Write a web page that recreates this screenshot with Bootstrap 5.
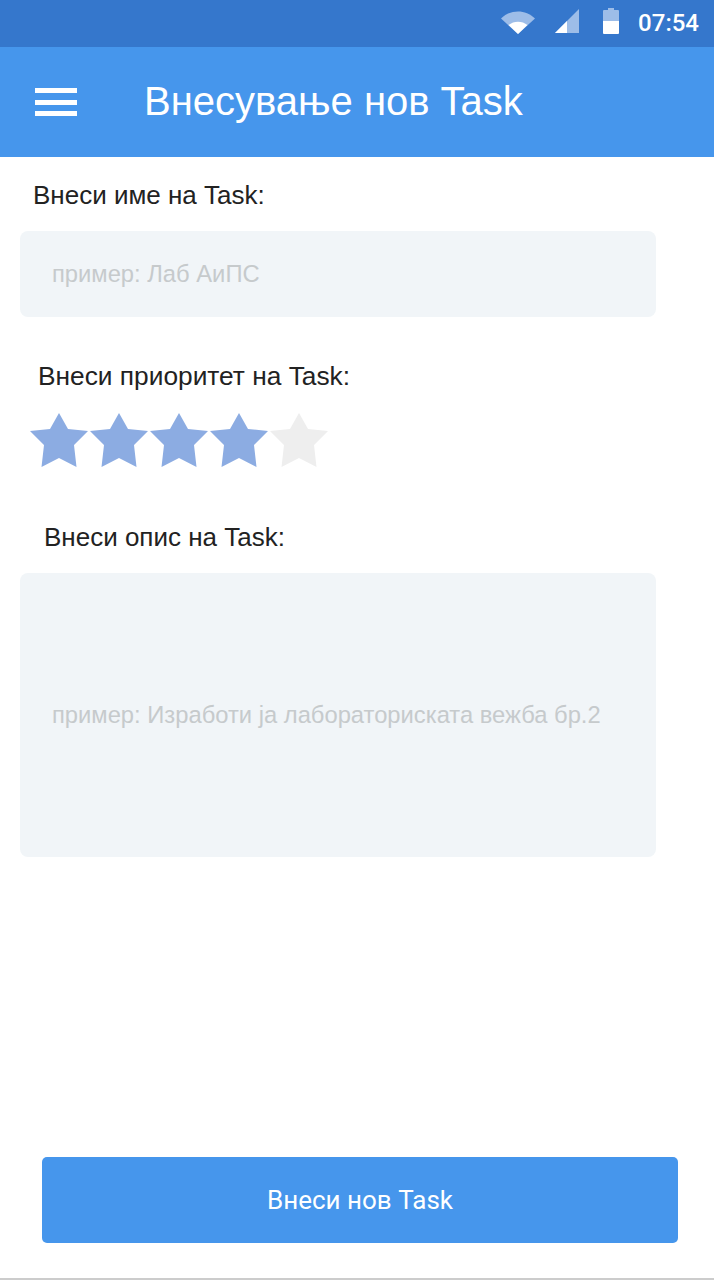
<!DOCTYPE html>
<html lang="mk">
<head>
    <meta charset="UTF-8">
    <meta name="viewport" content="width=device-width, initial-scale=1.0">
    <title>Внесување нов Task</title>
    <link href="https://cdn.jsdelivr.net/npm/bootstrap@5.3.0/dist/css/bootstrap.min.css" rel="stylesheet">
    <style>
        body {
            height: 1280px;
            font-family: "Liberation Sans", Arial, sans-serif;
            color: #222;
            background: #fff;
        }
        .status-strip {
            height: 47px;
            background: #3577cc;
            color: #fff;
            padding-right: 15px;
        }
        .status-time { font-family: Roboto, sans-serif; font-size: 24px; font-weight: 500; line-height: 1; margin: 0 0 2px 19px; }
        .wifi-icon { margin-bottom: 2px; }
        .signal-icon { margin: 0 0 5px 20px; }
        .battery-icon { margin: 0 0 6px 24px; }
        .app-strip {
            height: 110px;
            background: #4696ec;
            color: #fff;
            padding-left: 35px;
        }
        .app-title { font-size: 40px; font-weight: 400; line-height: 1; margin: 0 0 2px 67px; }
        .burger { width: 42px; height: 28px; flex-direction: column; justify-content: space-between; }
        .burger span { height: 5px; background: #fff; display: block; }
        .field-label { font-size: 26px; line-height: 30px; margin: 0; }
        .label-name { padding: 23px 0 0 33px; }
        .label-priority { padding: 44px 0 0 38px; font-size: 26.3px; }
        .label-desc { padding: 54px 0 0 44px; }
        .task-input.form-control {
            display: block;
            width: 636px;
            margin-left: 20px;
            border: 0;
            border-radius: 8px;
            background: #f1f5f8;
            font-family: "Liberation Sans", Arial, sans-serif;
            font-size: 23.75px;
            color: #222;
            padding: 0 32px;
            box-shadow: none;
        }
        .task-input::placeholder { color: #c6cacc; opacity: 1; }
        .name-input.form-control { height: 86px; margin-top: 21px; }
        .desc-input.form-control { height: 284px; min-height: 284px; margin-top: 21px; padding-top: 127px; line-height: 30px; resize: none; }
        .star-row { margin: 22px 0 1px 30px; gap: 2px; }
        .star-row svg { width: 58px; height: 54px; display: block; }
        .star-on { fill: #8cace2; }
        .star-off { fill: #eeeeee; }
        .submit-btn.btn {
            width: 636px;
            height: 86px;
            margin: 0 0 35px 42px;
            border: 0;
            border-radius: 5px;
            background: #4696ec;
            color: #fff;
            font-family: Roboto, sans-serif;
            font-size: 26px;
            font-weight: 400;
        }
        .bottom-rule { height: 2px; background: #ccc; }
    </style>
</head>
<body class="d-flex flex-column">
    <div class="status-strip d-flex align-items-center justify-content-end">
        <svg width="34" height="23" viewBox="0 0 34 23" class="wifi-icon">
            <path d="M0 7.5 C9.5 -2 24.5 -2 34 7.5 L17 23 Z" fill="#9dbde8"/>
            <path d="M7.5 14 C13 9.5 21 9.5 26.5 14 L17 23 Z" fill="#fff"/>
        </svg>
        <svg width="24" height="24" viewBox="0 0 24 24" class="signal-icon">
            <path d="M24 0 V24 H0 Z" fill="#9dbde8"/>
            <path d="M12 12 V24 H0 Z" fill="#fff"/>
        </svg>
        <svg width="16" height="26" viewBox="0 0 16 26" class="battery-icon">
            <path d="M5 0 H11 V2 H15 Q16 2 16 3 V13 H0 V3 Q0 2 1 2 H5 Z" fill="#9dbde8"/>
            <path d="M0 13 H16 V25 Q16 26 15 26 H1 Q0 26 0 25 Z" fill="#fff"/>
        </svg>
        <span class="status-time">07:54</span>
    </div>
    <header class="app-strip d-flex align-items-center">
        <div class="burger d-flex"><span></span><span></span><span></span></div>
        <h1 class="app-title">Внесување нов Task</h1>
    </header>
    <main class="flex-grow-1">
        <form>
            <label class="field-label label-name d-block" for="taskName">Внеси име на Task:</label>
            <input id="taskName" type="text" class="form-control task-input name-input" placeholder="пример: Лаб АиПС">
            <div class="field-label label-priority">Внеси приоритет на Task:</div>
            <div class="star-row d-flex" id="stars"></div>
            <label class="field-label label-desc d-block" for="taskDesc">Внеси опис на Task:</label>
            <textarea id="taskDesc" class="form-control task-input desc-input" placeholder="пример: Изработи ја лабораториската вежба бр.2"></textarea>
        </form>
    </main>
    <button type="button" class="btn submit-btn">Внеси нов Task</button>
    <div class="bottom-rule"></div>
    <script>
        // 4 of 5 stars selected
        const stars = document.getElementById('stars');
        for (let i = 0; i < 5; i++) {
            const cls = i < 4 ? 'star-on' : 'star-off';
            stars.insertAdjacentHTML('beforeend',
                `<svg viewBox="0 0 58 54"><polygon class="${cls}" points="29,0 38,16 58,18 44,32 46.5,54 29,45 11.5,54 14,32 0,18 20,16"/></svg>`);
        }
    </script>
    <script src="https://cdn.jsdelivr.net/npm/bootstrap@5.3.0/dist/js/bootstrap.bundle.min.js"></script>
</body>
</html>
